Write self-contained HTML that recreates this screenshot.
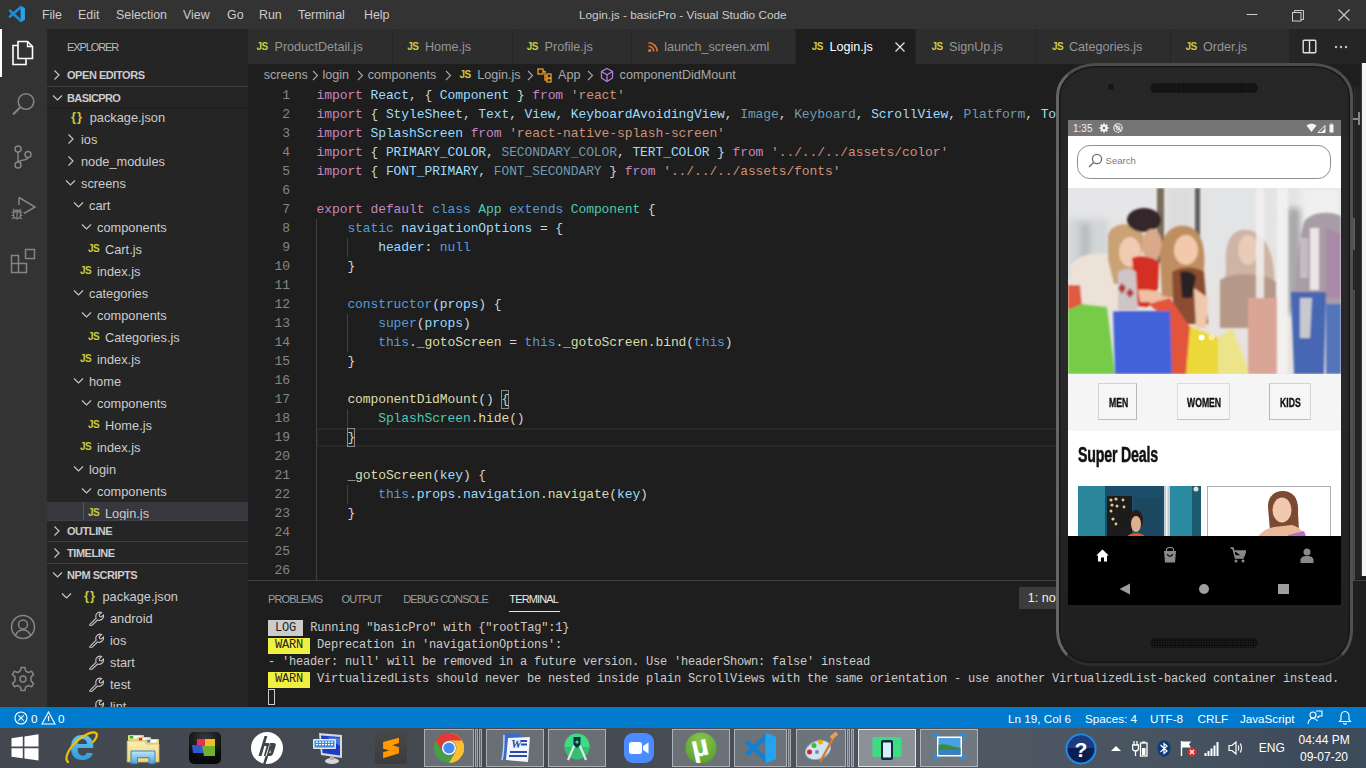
<!DOCTYPE html>
<html><head><meta charset="utf-8">
<style>
*{margin:0;padding:0;box-sizing:border-box}
html,body{width:1366px;height:768px;overflow:hidden;background:#1e1e1e;font-family:"Liberation Sans",sans-serif}
.a{position:absolute}
#title{left:0;top:0;width:1366px;height:29px;background:#333333}
#title .m{position:absolute;top:8px;font-size:12.4px;color:#cccccc;white-space:nowrap}
#act{left:0;top:29px;width:47px;height:678px;background:#333333}
#side{left:47px;top:29px;width:201px;height:678px;background:#252526;overflow:hidden}
#tabs{left:248px;top:29px;width:1118px;height:35px;background:#252526}
.tab{position:absolute;top:0;height:35px;background:#2d2d2d;border-right:1px solid #252526}
.tab .t{position:absolute;top:10px;font-size:12.6px;color:#969696;white-space:nowrap}
.js{position:absolute;font-family:"Liberation Sans",sans-serif;font-weight:bold;color:#cbcb41;font-size:10px;letter-spacing:-0.3px}
#crumb{left:248px;top:64px;width:1118px;height:21px;background:#1e1e1e}
#code{left:248px;top:85px;width:1118px;height:495px;background:#1e1e1e;overflow:hidden}
.ln{position:absolute;left:0;width:42px;text-align:right;font-family:"Liberation Mono",monospace;font-size:13px;letter-spacing:-0.1px;color:#858585;height:19px;line-height:19px}
.cl{position:absolute;left:68.6px;font-family:"Liberation Mono",monospace;font-size:13px;letter-spacing:-0.1px;color:#d4d4d4;height:19px;line-height:19px;white-space:pre}
.k{color:#c586c0}.v{color:#9cdcfe}.s{color:#ce9178}.b{color:#569cd6}.c{color:#4ec9b0}.f{color:#dcdcaa}.d{color:#6f9ab0}
#panel{left:248px;top:580px;width:1118px;height:127px;background:#1e1e1e;border-top:1px solid #414141}
.pt{position:absolute;top:12px;font-size:11px;color:#9d9d9d;white-space:nowrap;letter-spacing:-0.35px}
.term{position:absolute;left:20px;font-family:"Liberation Mono",monospace;font-size:13px;letter-spacing:-0.1px;color:#cccccc;white-space:pre;height:17px;line-height:17px}
.tag{background:#f0f040;color:#1e1e1e}
#status{left:0;top:707px;width:1366px;height:21px;background:#007acc;color:#fff}

#task{left:0;top:728px;width:1366px;height:40px;background:#3f434b}
.cat{font-size:12px;font-weight:bold;color:#111;-webkit-text-stroke:0.35px #111;height:14px;line-height:14px;transform:scaleX(0.72);transform-origin:0 0;white-space:nowrap}
.tb{top:729px;height:38px;background:rgba(255,255,255,0.2);border:1px solid rgba(255,255,255,0.45)}
.tbl{top:729px;height:38px;width:3px;background:rgba(255,255,255,0.18);border:1px solid rgba(255,255,255,0.4)}
.bm{display:inline-block;height:19px;vertical-align:top;box-shadow:inset 0 0 0 1px #8a8a8a;background:rgba(0,100,0,0.1)}
</style></head><body>
<div id="title" class="a">
 <svg class="a" style="left:4px;top:2px" width="26" height="24" viewBox="0 0 26 24"><path d="M16.6 4 L20.9 6 V18 L16.6 20 Z" fill="#24a6ef"/><path d="M6 8.6 L17 19 M6 14.6 L17 5" stroke="#1a8fd8" stroke-width="2.6" stroke-linecap="round"/></svg>
 <span class="m" style="left:42px">File</span>
 <span class="m" style="left:78px">Edit</span>
 <span class="m" style="left:116px">Selection</span>
 <span class="m" style="left:183px">View</span>
 <span class="m" style="left:227px">Go</span>
 <span class="m" style="left:259px">Run</span>
 <span class="m" style="left:298px">Terminal</span>
 <span class="m" style="left:364px">Help</span>
<svg class="a" style="left:1245px;top:8px" width="110" height="14" viewBox="0 0 110 14"><path d="M1.5 6.5 H12.5" stroke="#cccccc" stroke-width="1"/><rect x="47.5" y="4.5" width="8.5" height="8.5" fill="none" stroke="#cccccc" stroke-width="1"/><path d="M49.5 4.5 V2.5 H58.5 V11.5 H56" fill="none" stroke="#cccccc" stroke-width="1"/><path d="M93.5 1.5 L104.5 12.5 M104.5 1.5 L93.5 12.5" stroke="#cccccc" stroke-width="1.1"/></svg>
 <span class="m" style="left:579px;font-size:11.8px">Login.js - basicPro - Visual Studio Code</span>
</div>
<div id="act" class="a"></div>
<!-- activity bar icons -->
<div class="a" style="left:0;top:29px;width:2px;height:48px;background:#ffffff"></div>
<svg class="a" style="left:11px;top:40px" width="24" height="26" viewBox="0 0 24 26"><path d="M7 1.5 H16.5 L21.5 6.5 V18.5 H7 Z" fill="none" stroke="#ffffff" stroke-width="1.6"/><path d="M16.5 1.5 V6.5 H21.5" fill="none" stroke="#ffffff" stroke-width="1.3"/><path d="M7 5.5 H2 V24.5 H15 V18.5" fill="none" stroke="#ffffff" stroke-width="1.6"/></svg>
<svg class="a" style="left:11px;top:91px" width="26" height="26" viewBox="0 0 26 26"><circle cx="15" cy="10.5" r="7.8" fill="none" stroke="#858585" stroke-width="1.6"/><path d="M9.5 16 L2 23.5" stroke="#858585" stroke-width="1.9"/></svg>
<svg class="a" style="left:12px;top:143px" width="22" height="26" viewBox="0 0 22 26"><circle cx="6" cy="6" r="3" fill="none" stroke="#858585" stroke-width="1.5"/><circle cx="16" cy="11.5" r="3" fill="none" stroke="#858585" stroke-width="1.5"/><circle cx="6" cy="22" r="3" fill="none" stroke="#858585" stroke-width="1.5"/><path d="M6 9 V19 M16 14.5 C16 18 8 16 6.5 19" fill="none" stroke="#858585" stroke-width="1.5"/></svg>
<svg class="a" style="left:10px;top:195px" width="28" height="26" viewBox="0 0 28 26"><path d="M9 2.5 L25 12 L14 18.5" fill="none" stroke="#858585" stroke-width="1.5"/><path d="M9 2.5 V10" stroke="#858585" stroke-width="1.5"/><ellipse cx="7" cy="19.5" rx="3.6" ry="4.2" fill="none" stroke="#858585" stroke-width="1.4"/><path d="M1.5 17 H12.5 M1.5 20.5 H3.5 M10.5 20.5 H12.5 M2 24 L3.8 22.5 M12 24 L10.2 22.5 M3 14 L4.5 15.8 M11 14 L9.5 15.8 M7 16 V23" fill="none" stroke="#858585" stroke-width="1.2"/></svg>
<svg class="a" style="left:10px;top:248px" width="27" height="26" viewBox="0 0 27 26"><path d="M1.5 7.5 H8.5 V15.5 H16.5 V24.5 H1.5 Z M1.5 15.5 H8.5 V24.5 M8.5 15.5 V24.5" fill="none" stroke="#858585" stroke-width="1.5"/><rect x="15.5" y="1.5" width="9" height="9" fill="none" stroke="#858585" stroke-width="1.5"/></svg>
<svg class="a" style="left:10px;top:614px" width="26" height="26" viewBox="0 0 26 26"><circle cx="13" cy="13" r="11.5" fill="none" stroke="#858585" stroke-width="1.5"/><circle cx="13" cy="10.5" r="4.5" fill="none" stroke="#858585" stroke-width="1.5"/><path d="M5.5 21.5 C7 17.5 10 16 13 16 C16 16 19 17.5 20.5 21.5" fill="none" stroke="#858585" stroke-width="1.5"/></svg>
<svg class="a" style="left:10px;top:666px" width="26" height="26" viewBox="-13 -13 26 26"><path id="gear" d="M-1.9 -11.5 H1.9 L2.6 -8.1 L5.4 -6.5 L8.7 -7.7 L10.6 -4.4 L8 -2.1 V2.1 L10.6 4.4 L8.7 7.7 L5.4 6.5 L2.6 8.1 L1.9 11.5 H-1.9 L-2.6 8.1 L-5.4 6.5 L-8.7 7.7 L-10.6 4.4 L-8 2.1 V-2.1 L-10.6 -4.4 L-8.7 -7.7 L-5.4 -6.5 L-2.6 -8.1 Z" fill="none" stroke="#858585" stroke-width="1.5" stroke-linejoin="round"/><circle r="3" fill="none" stroke="#858585" stroke-width="1.5"/></svg>

<div id="side" class="a"></div>
<div class="a" style="left:67px;top:39px;height:16px;line-height:16px;font-size:11px;color:#bbbbbb;letter-spacing:-1.1px">EXPLORER</div>
<svg class="a" style="left:53px;top:69px" width="8" height="12"><polyline points="1.5,1.5 6,6 1.5,10.5" fill="none" stroke="#c5c5c5" stroke-width="1.2"/></svg>
<div class="a" style="left:67px;top:64px;height:22px;line-height:22px;font-size:11px;color:#cccccc;white-space:nowrap;font-weight:bold;letter-spacing:-0.45px">OPEN EDITORS</div>
<div class="a" style="left:47px;top:86px;width:201px;height:1px;background:#3f3f46"></div>
<svg class="a" style="left:52px;top:94px" width="12" height="8"><polyline points="1,1.5 5.5,6 10,1.5" fill="none" stroke="#c5c5c5" stroke-width="1.2"/></svg>
<div class="a" style="left:67px;top:87px;height:22px;line-height:22px;font-size:11px;color:#cccccc;white-space:nowrap;font-weight:bold;letter-spacing:-0.6px">BASICPRO</div>
<div class="a" style="left:47px;top:107px;width:201px;height:2px;background:linear-gradient(#1a1a1a,#252526)"></div>
<div class="a" style="left:47px;top:502px;width:201px;height:18px;background:#37373d"></div>
<div class="a" style="left:83px;top:502px;width:1px;height:18px;background:#585858"></div>
<div class="a" style="left:71px;top:109px;height:16px;line-height:16px;font-size:13px;font-weight:bold;color:#cbcb41;letter-spacing:1px">{}</div>
<div class="a" style="left:89.7px;top:106px;height:22px;line-height:24px;font-size:12.8px;color:#cccccc;white-space:nowrap;letter-spacing:0px">package.json</div>
<svg class="a" style="left:67px;top:133px" width="8" height="12"><polyline points="1.5,1.5 6,6 1.5,10.5" fill="none" stroke="#c5c5c5" stroke-width="1.2"/></svg>
<div class="a" style="left:81px;top:128px;height:22px;line-height:24px;font-size:12.8px;color:#cccccc;white-space:nowrap;letter-spacing:0px">ios</div>
<svg class="a" style="left:67px;top:155px" width="8" height="12"><polyline points="1.5,1.5 6,6 1.5,10.5" fill="none" stroke="#c5c5c5" stroke-width="1.2"/></svg>
<div class="a" style="left:81px;top:150px;height:22px;line-height:24px;font-size:12.8px;color:#cccccc;white-space:nowrap;letter-spacing:0px">node_modules</div>
<svg class="a" style="left:65px;top:179px" width="12" height="8"><polyline points="1,1.5 5.5,6 10,1.5" fill="none" stroke="#c5c5c5" stroke-width="1.2"/></svg>
<div class="a" style="left:81px;top:172px;height:22px;line-height:24px;font-size:12.8px;color:#cccccc;white-space:nowrap;letter-spacing:0px">screens</div>
<svg class="a" style="left:73px;top:201px" width="12" height="8"><polyline points="1,1.5 5.5,6 10,1.5" fill="none" stroke="#c5c5c5" stroke-width="1.2"/></svg>
<div class="a" style="left:89px;top:194px;height:22px;line-height:24px;font-size:12.8px;color:#cccccc;white-space:nowrap;letter-spacing:0px">cart</div>
<svg class="a" style="left:81px;top:223px" width="12" height="8"><polyline points="1,1.5 5.5,6 10,1.5" fill="none" stroke="#c5c5c5" stroke-width="1.2"/></svg>
<div class="a" style="left:97px;top:216px;height:22px;line-height:24px;font-size:12.8px;color:#cccccc;white-space:nowrap;letter-spacing:0px">components</div>
<div class="a" style="left:88px;top:243px;height:12px;line-height:12px;font-size:10px;font-weight:bold;color:#cbcb41;letter-spacing:-0.6px">JS</div>
<div class="a" style="left:105px;top:238px;height:22px;line-height:24px;font-size:12.8px;color:#cccccc;white-space:nowrap;letter-spacing:0px">Cart.js</div>
<div class="a" style="left:80px;top:265px;height:12px;line-height:12px;font-size:10px;font-weight:bold;color:#cbcb41;letter-spacing:-0.6px">JS</div>
<div class="a" style="left:97px;top:260px;height:22px;line-height:24px;font-size:12.8px;color:#cccccc;white-space:nowrap;letter-spacing:0px">index.js</div>
<svg class="a" style="left:73px;top:289px" width="12" height="8"><polyline points="1,1.5 5.5,6 10,1.5" fill="none" stroke="#c5c5c5" stroke-width="1.2"/></svg>
<div class="a" style="left:89px;top:282px;height:22px;line-height:24px;font-size:12.8px;color:#cccccc;white-space:nowrap;letter-spacing:0px">categories</div>
<svg class="a" style="left:81px;top:311px" width="12" height="8"><polyline points="1,1.5 5.5,6 10,1.5" fill="none" stroke="#c5c5c5" stroke-width="1.2"/></svg>
<div class="a" style="left:97px;top:304px;height:22px;line-height:24px;font-size:12.8px;color:#cccccc;white-space:nowrap;letter-spacing:0px">components</div>
<div class="a" style="left:88px;top:331px;height:12px;line-height:12px;font-size:10px;font-weight:bold;color:#cbcb41;letter-spacing:-0.6px">JS</div>
<div class="a" style="left:105px;top:326px;height:22px;line-height:24px;font-size:12.8px;color:#cccccc;white-space:nowrap;letter-spacing:0px">Categories.js</div>
<div class="a" style="left:80px;top:353px;height:12px;line-height:12px;font-size:10px;font-weight:bold;color:#cbcb41;letter-spacing:-0.6px">JS</div>
<div class="a" style="left:97px;top:348px;height:22px;line-height:24px;font-size:12.8px;color:#cccccc;white-space:nowrap;letter-spacing:0px">index.js</div>
<svg class="a" style="left:73px;top:377px" width="12" height="8"><polyline points="1,1.5 5.5,6 10,1.5" fill="none" stroke="#c5c5c5" stroke-width="1.2"/></svg>
<div class="a" style="left:89px;top:370px;height:22px;line-height:24px;font-size:12.8px;color:#cccccc;white-space:nowrap;letter-spacing:0px">home</div>
<svg class="a" style="left:81px;top:399px" width="12" height="8"><polyline points="1,1.5 5.5,6 10,1.5" fill="none" stroke="#c5c5c5" stroke-width="1.2"/></svg>
<div class="a" style="left:97px;top:392px;height:22px;line-height:24px;font-size:12.8px;color:#cccccc;white-space:nowrap;letter-spacing:0px">components</div>
<div class="a" style="left:88px;top:419px;height:12px;line-height:12px;font-size:10px;font-weight:bold;color:#cbcb41;letter-spacing:-0.6px">JS</div>
<div class="a" style="left:105px;top:414px;height:22px;line-height:24px;font-size:12.8px;color:#cccccc;white-space:nowrap;letter-spacing:0px">Home.js</div>
<div class="a" style="left:80px;top:441px;height:12px;line-height:12px;font-size:10px;font-weight:bold;color:#cbcb41;letter-spacing:-0.6px">JS</div>
<div class="a" style="left:97px;top:436px;height:22px;line-height:24px;font-size:12.8px;color:#cccccc;white-space:nowrap;letter-spacing:0px">index.js</div>
<svg class="a" style="left:73px;top:465px" width="12" height="8"><polyline points="1,1.5 5.5,6 10,1.5" fill="none" stroke="#c5c5c5" stroke-width="1.2"/></svg>
<div class="a" style="left:89px;top:458px;height:22px;line-height:24px;font-size:12.8px;color:#cccccc;white-space:nowrap;letter-spacing:0px">login</div>
<svg class="a" style="left:81px;top:487px" width="12" height="8"><polyline points="1,1.5 5.5,6 10,1.5" fill="none" stroke="#c5c5c5" stroke-width="1.2"/></svg>
<div class="a" style="left:97px;top:480px;height:22px;line-height:24px;font-size:12.8px;color:#cccccc;white-space:nowrap;letter-spacing:0px">components</div>
<div class="a" style="left:88px;top:507px;height:12px;line-height:12px;font-size:10px;font-weight:bold;color:#cbcb41;letter-spacing:-0.6px">JS</div>
<div class="a" style="left:105px;top:502px;height:22px;line-height:24px;font-size:12.8px;color:#cccccc;white-space:nowrap;letter-spacing:0px">Login.js</div>
<div class="a" style="left:47px;top:520px;width:201px;height:187px;background:#252526;overflow:hidden">
<div class="a" style="left:0;top:0;width:201px;height:1px;background:#3f3f46"></div>
<svg class="a" style="left:6px;top:5px" width="8" height="12"><polyline points="1.5,1.5 6,6 1.5,10.5" fill="none" stroke="#c5c5c5" stroke-width="1.2"/></svg>
<div class="a" style="left:20px;top:0px;height:22px;line-height:22px;font-size:11px;color:#cccccc;white-space:nowrap;font-weight:bold;letter-spacing:-0.45px">OUTLINE</div>
<div class="a" style="left:0;top:21px;width:201px;height:1px;background:#3f3f46"></div>
<svg class="a" style="left:6px;top:27px" width="8" height="12"><polyline points="1.5,1.5 6,6 1.5,10.5" fill="none" stroke="#c5c5c5" stroke-width="1.2"/></svg>
<div class="a" style="left:20px;top:22px;height:22px;line-height:22px;font-size:11px;color:#cccccc;white-space:nowrap;font-weight:bold;letter-spacing:-0.45px">TIMELINE</div>
<div class="a" style="left:0;top:43px;width:201px;height:1px;background:#3f3f46"></div>
<svg class="a" style="left:5px;top:51px" width="12" height="8"><polyline points="1,1.5 5.5,6 10,1.5" fill="none" stroke="#c5c5c5" stroke-width="1.2"/></svg>
<div class="a" style="left:20px;top:44px;height:22px;line-height:22px;font-size:11px;color:#cccccc;white-space:nowrap;font-weight:bold;letter-spacing:-0.45px">NPM SCRIPTS</div>
<svg class="a" style="left:14px;top:72px" width="12" height="8"><polyline points="1,1.5 5.5,6 10,1.5" fill="none" stroke="#c5c5c5" stroke-width="1.2"/></svg>
<div class="a" style="left:37px;top:68px;height:16px;line-height:16px;font-size:13px;font-weight:bold;color:#cbcb41;letter-spacing:1px">{}</div>
<div class="a" style="left:55.5px;top:65px;height:22px;line-height:24px;font-size:12.8px;color:#cccccc;white-space:nowrap;letter-spacing:0px">package.json</div>
<svg class="a" style="left:42px;top:91px" width="15" height="15" viewBox="0 0 15 15"><path d="M1.2 13.2 L7.2 7.2 C6.4 5.2 7 3 8.8 1.8 C10 1.1 11.4 1 12.6 1.4 L10.2 3.8 L10.6 5.6 L12.4 6 L14.4 4 C14.8 5.4 14.4 7 13.2 8 C12 9.2 10.2 9.6 8.6 9 L2.6 14.6 C2.2 15 1.4 15 1 14.6 C0.6 14.2 0.7 13.6 1.2 13.2 Z" fill="none" stroke="#c5c5c5" stroke-width="1.1"/></svg>
<div class="a" style="left:63px;top:87px;height:22px;line-height:24px;font-size:12.8px;color:#cccccc;white-space:nowrap;letter-spacing:0px">android</div>
<svg class="a" style="left:42px;top:113px" width="15" height="15" viewBox="0 0 15 15"><path d="M1.2 13.2 L7.2 7.2 C6.4 5.2 7 3 8.8 1.8 C10 1.1 11.4 1 12.6 1.4 L10.2 3.8 L10.6 5.6 L12.4 6 L14.4 4 C14.8 5.4 14.4 7 13.2 8 C12 9.2 10.2 9.6 8.6 9 L2.6 14.6 C2.2 15 1.4 15 1 14.6 C0.6 14.2 0.7 13.6 1.2 13.2 Z" fill="none" stroke="#c5c5c5" stroke-width="1.1"/></svg>
<div class="a" style="left:63px;top:109px;height:22px;line-height:24px;font-size:12.8px;color:#cccccc;white-space:nowrap;letter-spacing:0px">ios</div>
<svg class="a" style="left:42px;top:135px" width="15" height="15" viewBox="0 0 15 15"><path d="M1.2 13.2 L7.2 7.2 C6.4 5.2 7 3 8.8 1.8 C10 1.1 11.4 1 12.6 1.4 L10.2 3.8 L10.6 5.6 L12.4 6 L14.4 4 C14.8 5.4 14.4 7 13.2 8 C12 9.2 10.2 9.6 8.6 9 L2.6 14.6 C2.2 15 1.4 15 1 14.6 C0.6 14.2 0.7 13.6 1.2 13.2 Z" fill="none" stroke="#c5c5c5" stroke-width="1.1"/></svg>
<div class="a" style="left:63px;top:131px;height:22px;line-height:24px;font-size:12.8px;color:#cccccc;white-space:nowrap;letter-spacing:0px">start</div>
<svg class="a" style="left:42px;top:157px" width="15" height="15" viewBox="0 0 15 15"><path d="M1.2 13.2 L7.2 7.2 C6.4 5.2 7 3 8.8 1.8 C10 1.1 11.4 1 12.6 1.4 L10.2 3.8 L10.6 5.6 L12.4 6 L14.4 4 C14.8 5.4 14.4 7 13.2 8 C12 9.2 10.2 9.6 8.6 9 L2.6 14.6 C2.2 15 1.4 15 1 14.6 C0.6 14.2 0.7 13.6 1.2 13.2 Z" fill="none" stroke="#c5c5c5" stroke-width="1.1"/></svg>
<div class="a" style="left:63px;top:153px;height:22px;line-height:24px;font-size:12.8px;color:#cccccc;white-space:nowrap;letter-spacing:0px">test</div>
<svg class="a" style="left:42px;top:179px" width="15" height="15" viewBox="0 0 15 15"><path d="M1.2 13.2 L7.2 7.2 C6.4 5.2 7 3 8.8 1.8 C10 1.1 11.4 1 12.6 1.4 L10.2 3.8 L10.6 5.6 L12.4 6 L14.4 4 C14.8 5.4 14.4 7 13.2 8 C12 9.2 10.2 9.6 8.6 9 L2.6 14.6 C2.2 15 1.4 15 1 14.6 C0.6 14.2 0.7 13.6 1.2 13.2 Z" fill="none" stroke="#c5c5c5" stroke-width="1.1"/></svg>
<div class="a" style="left:63px;top:175px;height:22px;line-height:24px;font-size:12.8px;color:#cccccc;white-space:nowrap;letter-spacing:0px">lint</div>
</div>

<div id="tabs" class="a"></div>
<div id="crumb" class="a"></div>
<div class="a" style="left:248px;top:29px;width:144px;height:35px;background:#2d2d2d"></div>
<div class="a" style="left:256.5px;top:41px;height:12px;line-height:12px;font-size:10px;font-weight:bold;color:#cbcb41;letter-spacing:-0.6px">JS</div>
<div class="a" style="left:274.5px;top:29px;height:36px;line-height:37.5px;font-size:12.6px;color:#969696;white-space:nowrap">ProductDetail.js</div>
<div class="a" style="left:393px;top:29px;width:118.5px;height:35px;background:#2d2d2d"></div>
<div class="a" style="left:407.3px;top:41px;height:12px;line-height:12px;font-size:10px;font-weight:bold;color:#cbcb41;letter-spacing:-0.6px">JS</div>
<div class="a" style="left:424.9px;top:29px;height:36px;line-height:37.5px;font-size:12.6px;color:#969696;white-space:nowrap">Home.js</div>
<div class="a" style="left:512.5px;top:29px;width:118.89999999999998px;height:35px;background:#2d2d2d"></div>
<div class="a" style="left:526.8px;top:41px;height:12px;line-height:12px;font-size:10px;font-weight:bold;color:#cbcb41;letter-spacing:-0.6px">JS</div>
<div class="a" style="left:544.6px;top:29px;height:36px;line-height:37.5px;font-size:12.6px;color:#969696;white-space:nowrap">Profile.js</div>
<div class="a" style="left:632.4px;top:29px;width:162.60000000000002px;height:35px;background:#2d2d2d"></div>
<svg class="a" style="left:648.3px;top:42px" width="10" height="10" viewBox="0 0 10 10"><circle cx="1.6" cy="8.4" r="1.5" fill="#e37933"/><path d="M0.5 4.2 A5.3 5.3 0 0 1 5.8 9.5" fill="none" stroke="#e37933" stroke-width="1.6"/><path d="M0.5 0.8 A8.7 8.7 0 0 1 9.2 9.5" fill="none" stroke="#e37933" stroke-width="1.6"/></svg>
<div class="a" style="left:664.3px;top:29px;height:36px;line-height:37.5px;font-size:12.6px;color:#969696;white-space:nowrap">launch_screen.xml</div>
<div class="a" style="left:796px;top:29px;width:119px;height:35px;background:#1e1e1e"></div>
<div class="a" style="left:811.8px;top:41px;height:12px;line-height:12px;font-size:10px;font-weight:bold;color:#cbcb41;letter-spacing:-0.6px">JS</div>
<div class="a" style="left:829.4px;top:29px;height:36px;line-height:37.5px;font-size:12.6px;color:#ffffff;white-space:nowrap">Login.js</div>
<div class="a" style="left:916px;top:29px;width:119.5px;height:35px;background:#2d2d2d"></div>
<div class="a" style="left:931.5px;top:41px;height:12px;line-height:12px;font-size:10px;font-weight:bold;color:#cbcb41;letter-spacing:-0.6px">JS</div>
<div class="a" style="left:949px;top:29px;height:36px;line-height:37.5px;font-size:12.6px;color:#969696;white-space:nowrap">SignUp.js</div>
<div class="a" style="left:1036.5px;top:29px;width:133.5px;height:35px;background:#2d2d2d"></div>
<div class="a" style="left:1052px;top:41px;height:12px;line-height:12px;font-size:10px;font-weight:bold;color:#cbcb41;letter-spacing:-0.6px">JS</div>
<div class="a" style="left:1068.9px;top:29px;height:36px;line-height:37.5px;font-size:12.6px;color:#969696;white-space:nowrap">Categories.js</div>
<div class="a" style="left:1171px;top:29px;width:118px;height:35px;background:#2d2d2d"></div>
<div class="a" style="left:1185.5px;top:41px;height:12px;line-height:12px;font-size:10px;font-weight:bold;color:#cbcb41;letter-spacing:-0.6px">JS</div>
<div class="a" style="left:1203px;top:29px;height:36px;line-height:37.5px;font-size:12.6px;color:#969696;white-space:nowrap">Order.js</div>
<svg class="a" style="left:894px;top:41px" width="12" height="12"><path d="M1.5 1.5 L10.5 10.5 M10.5 1.5 L1.5 10.5" stroke="#e0e0e0" stroke-width="1.3"/></svg>
<svg class="a" style="left:1302px;top:39px" width="15" height="15"><rect x="1.2" y="1.2" width="12.6" height="12.6" rx="1" fill="none" stroke="#e0e0e0" stroke-width="1.4"/><line x1="7.5" y1="1" x2="7.5" y2="14" stroke="#e0e0e0" stroke-width="1.4"/></svg>
<svg class="a" style="left:1334px;top:45px" width="15" height="4"><circle cx="2" cy="2" r="1.2" fill="#c5c5c5"/><circle cx="7" cy="2" r="1.2" fill="#c5c5c5"/><circle cx="12" cy="2" r="1.2" fill="#c5c5c5"/></svg>
<div class="a" style="left:263.7px;top:64px;height:22px;line-height:22px;font-size:12.6px;color:#a9a9a9;white-space:nowrap">screens</div>
<svg class="a" style="left:312px;top:70px" width="7" height="11"><polyline points="1,1 5.5,5.5 1,10" fill="none" stroke="#a9a9a9" stroke-width="1.1"/></svg>
<div class="a" style="left:322.4px;top:64px;height:22px;line-height:22px;font-size:12.6px;color:#a9a9a9;white-space:nowrap">login</div>
<svg class="a" style="left:357px;top:70px" width="7" height="11"><polyline points="1,1 5.5,5.5 1,10" fill="none" stroke="#a9a9a9" stroke-width="1.1"/></svg>
<div class="a" style="left:367.8px;top:64px;height:22px;line-height:22px;font-size:12.6px;color:#a9a9a9;white-space:nowrap">components</div>
<svg class="a" style="left:445px;top:70px" width="7" height="11"><polyline points="1,1 5.5,5.5 1,10" fill="none" stroke="#a9a9a9" stroke-width="1.1"/></svg>
<div class="a" style="left:459.6px;top:69px;height:12px;line-height:12px;font-size:10px;font-weight:bold;color:#cbcb41;letter-spacing:-0.6px">JS</div>
<div class="a" style="left:477.2px;top:64px;height:22px;line-height:22px;font-size:12.6px;color:#a9a9a9;white-space:nowrap">Login.js</div>
<svg class="a" style="left:527px;top:70px" width="7" height="11"><polyline points="1,1 5.5,5.5 1,10" fill="none" stroke="#a9a9a9" stroke-width="1.1"/></svg>
<svg class="a" style="left:537px;top:67px" width="16" height="16" viewBox="0 0 16 16"><g fill="none" stroke="#ee9d28" stroke-width="1.3"><rect x="1" y="2" width="5" height="5" transform="rotate(0)"/><rect x="10" y="7" width="4" height="4"/><rect x="10" y="11.5" width="4" height="3.5"/><path d="M6 4.5 H8 V13 H10 M8 9 H10"/></g></svg>
<div class="a" style="left:558px;top:64px;height:22px;line-height:22px;font-size:12.6px;color:#a9a9a9;white-space:nowrap">App</div>
<svg class="a" style="left:587px;top:70px" width="7" height="11"><polyline points="1,1 5.5,5.5 1,10" fill="none" stroke="#a9a9a9" stroke-width="1.1"/></svg>
<svg class="a" style="left:600px;top:67px" width="14" height="16" viewBox="0 0 14 16"><g fill="none" stroke="#b180d7" stroke-width="1.3"><path d="M7 1.5 L12.5 4.5 V11 L7 14.5 L1.5 11 V4.5 Z"/><path d="M1.5 4.5 L7 7.8 L12.5 4.5 M7 7.8 V14.5"/></g></svg>
<div class="a" style="left:619.6px;top:64px;height:22px;line-height:22px;font-size:12.6px;color:#a9a9a9;white-space:nowrap">componentDidMount</div>

<div id="code" class="a">
<div class="a" style="left:68px;top:343px;width:1050px;height:19px;border:2px solid #282828"></div>
<div class="a" style="left:68px;top:134px;width:1px;height:361px;background:#404040"></div>
<div class="a" style="left:99px;top:153px;width:1px;height:19px;background:#404040"></div>
<div class="a" style="left:99px;top:229px;width:1px;height:38px;background:#404040"></div>
<div class="a" style="left:99px;top:324px;width:1px;height:19px;background:#404040"></div>
<div class="a" style="left:99px;top:400px;width:1px;height:19px;background:#404040"></div>
<div class="ln" style="top:1px">1</div>
<div class="cl" style="top:1px"><span class="k">import</span> <span class="v">React</span>, { <span class="v">Component</span> } <span class="k">from</span> <span class="s">'react'</span></div>
<div class="ln" style="top:20px">2</div>
<div class="cl" style="top:20px"><span class="k">import</span> { <span class="v">StyleSheet</span>, <span class="v">Text</span>, <span class="v">View</span>, <span class="v">KeyboardAvoidingView</span>, <span class="d">Image</span>, <span class="d">Keyboard</span>, <span class="v">ScrollView</span>, <span class="d">Platform</span>, <span class="v">TouchableOpacity</span> } <span class="k">from</span> <span class="s">'react-native'</span></div>
<div class="ln" style="top:39px">3</div>
<div class="cl" style="top:39px"><span class="k">import</span> <span class="v">SplashScreen</span> <span class="k">from</span> <span class="s">'react-native-splash-screen'</span></div>
<div class="ln" style="top:58px">4</div>
<div class="cl" style="top:58px"><span class="k">import</span> { <span class="v">PRIMARY_COLOR</span>, <span class="d">SECONDARY_COLOR</span>, <span class="v">TERT_COLOR</span> } <span class="k">from</span> <span class="s">'../../../assets/color'</span></div>
<div class="ln" style="top:77px">5</div>
<div class="cl" style="top:77px"><span class="k">import</span> { <span class="v">FONT_PRIMARY</span>, <span class="d">FONT_SECONDARY</span> } <span class="k">from</span> <span class="s">'../../../assets/fonts'</span></div>
<div class="ln" style="top:96px">6</div>
<div class="ln" style="top:115px">7</div>
<div class="cl" style="top:115px"><span class="k">export</span> <span class="k">default</span> <span class="b">class</span> <span class="c">App</span> <span class="b">extends</span> <span class="c">Component</span> {</div>
<div class="ln" style="top:134px">8</div>
<div class="cl" style="top:134px">    <span class="b">static</span> <span class="v">navigationOptions</span> = {</div>
<div class="ln" style="top:153px">9</div>
<div class="cl" style="top:153px">        <span class="v">header</span>: <span class="b">null</span></div>
<div class="ln" style="top:172px">10</div>
<div class="cl" style="top:172px">    }</div>
<div class="ln" style="top:191px">11</div>
<div class="ln" style="top:210px">12</div>
<div class="cl" style="top:210px">    <span class="b">constructor</span>(<span class="v">props</span>) {</div>
<div class="ln" style="top:229px">13</div>
<div class="cl" style="top:229px">        <span class="b">super</span>(<span class="v">props</span>)</div>
<div class="ln" style="top:248px">14</div>
<div class="cl" style="top:248px">        <span class="b">this</span>.<span class="f">_gotoScreen</span> = <span class="b">this</span>.<span class="f">_gotoScreen</span>.<span class="f">bind</span>(<span class="b">this</span>)</div>
<div class="ln" style="top:267px">15</div>
<div class="cl" style="top:267px">    }</div>
<div class="ln" style="top:286px">16</div>
<div class="ln" style="top:305px">17</div>
<div class="cl" style="top:305px">    <span class="f">componentDidMount</span>() <span class="bm">{</span></div>
<div class="ln" style="top:324px">18</div>
<div class="cl" style="top:324px">        <span class="c">SplashScreen</span>.<span class="f">hide</span>()</div>
<div class="ln" style="top:343px">19</div>
<div class="cl" style="top:343px">    <span class="bm">}</span></div>
<div class="ln" style="top:362px">20</div>
<div class="ln" style="top:381px">21</div>
<div class="cl" style="top:381px">    <span class="f">_gotoScreen</span>(<span class="v">key</span>) {</div>
<div class="ln" style="top:400px">22</div>
<div class="cl" style="top:400px">        <span class="b">this</span>.<span class="v">props</span>.<span class="v">navigation</span>.<span class="f">navigate</span>(<span class="v">key</span>)</div>
<div class="ln" style="top:419px">23</div>
<div class="cl" style="top:419px">    }</div>
<div class="ln" style="top:438px">24</div>
<div class="ln" style="top:457px">25</div>
<div class="ln" style="top:476px">26</div>
</div>
<div id="panel" class="a"></div>
<div id="status" class="a"></div>
<div class="a" style="left:268px;top:588px;height:22px;line-height:22px;font-size:11px;color:#9d9d9d;white-space:nowrap;letter-spacing:-0.85px">PROBLEMS</div>
<div class="a" style="left:341.6px;top:588px;height:22px;line-height:22px;font-size:11px;color:#9d9d9d;white-space:nowrap;letter-spacing:-0.85px">OUTPUT</div>
<div class="a" style="left:403.2px;top:588px;height:22px;line-height:22px;font-size:11px;color:#9d9d9d;white-space:nowrap;letter-spacing:-0.85px">DEBUG CONSOLE</div>
<div class="a" style="left:509.3px;top:588px;height:22px;line-height:22px;font-size:11px;color:#e7e7e7;white-space:nowrap;letter-spacing:-0.85px">TERMINAL</div>
<div class="a" style="left:509px;top:611px;width:51px;height:1px;background:#e7e7e7"></div>
<div class="a" style="left:1019px;top:587px;width:60px;height:22px;background:#3c3c3c"></div>
<div class="a" style="left:1027.8px;top:587px;height:22px;line-height:22px;font-size:12.5px;color:#f0f0f0;white-space:nowrap">1: node</div>
<div class="a" style="left:268px;top:620px;width:35px;height:16px;background:#cccccc"></div>
<div class="a" style="left:275px;top:620px;height:17px;line-height:17px;font-family:'Liberation Mono',monospace;font-size:12px;letter-spacing:-0.2px;color:#cccccc;white-space:pre"><span style="color:#1e1e1e">LOG</span></div>
<div class="a" style="left:310.3px;top:620px;height:17px;line-height:17px;font-family:'Liberation Mono',monospace;font-size:12px;letter-spacing:-0.2px;color:#cccccc;white-space:pre">Running "basicPro" with {"rootTag":1}</div>
<div class="a" style="left:268px;top:637.5px;width:42px;height:16px;background:#f0f040"></div>
<div class="a" style="left:275px;top:637px;height:17px;line-height:17px;font-family:'Liberation Mono',monospace;font-size:12px;letter-spacing:-0.2px;color:#cccccc;white-space:pre"><span style="color:#1e1e1e">WARN</span></div>
<div class="a" style="left:316.9px;top:637px;height:17px;line-height:17px;font-family:'Liberation Mono',monospace;font-size:12px;letter-spacing:-0.2px;color:#cccccc;white-space:pre">Deprecation in 'navigationOptions':</div>
<div class="a" style="left:268px;top:654px;height:17px;line-height:17px;font-family:'Liberation Mono',monospace;font-size:12px;letter-spacing:-0.2px;color:#cccccc;white-space:pre">- 'header: null' will be removed in a future version. Use 'headerShown: false' instead</div>
<div class="a" style="left:268px;top:671.5px;width:42px;height:16px;background:#f0f040"></div>
<div class="a" style="left:275px;top:671px;height:17px;line-height:17px;font-family:'Liberation Mono',monospace;font-size:12px;letter-spacing:-0.2px;color:#cccccc;white-space:pre"><span style="color:#1e1e1e">WARN</span></div>
<div class="a" style="left:316.9px;top:671px;height:17px;line-height:17px;font-family:'Liberation Mono',monospace;font-size:12px;letter-spacing:-0.2px;color:#cccccc;white-space:pre">VirtualizedLists should never be nested inside plain ScrollViews with the same orientation - use another VirtualizedList-backed container instead.</div>
<div class="a" style="left:268px;top:689px;width:7px;height:16px;border:1px solid #cccccc"></div>
<svg class="a" style="left:14px;top:711px" width="14" height="14" viewBox="0 0 14 14"><circle cx="7" cy="7" r="6" fill="none" stroke="#fff" stroke-width="1.1"/><path d="M4.3 4.3 L9.7 9.7 M9.7 4.3 L4.3 9.7" stroke="#fff" stroke-width="1.1"/></svg>
<div class="a" style="left:31px;top:708px;height:21px;line-height:22px;font-size:11.7px;color:#ffffff;white-space:nowrap">0</div>
<svg class="a" style="left:41px;top:711px" width="15" height="14" viewBox="0 0 15 14"><path d="M7.5 1 L14 13 H1 Z" fill="none" stroke="#fff" stroke-width="1.1"/><path d="M7.5 5 V10" stroke="#fff" stroke-width="1.2"/></svg>
<div class="a" style="left:58px;top:708px;height:21px;line-height:22px;font-size:11.7px;color:#ffffff;white-space:nowrap">0</div>
<div class="a" style="left:1008px;top:708px;height:21px;line-height:22px;font-size:11.7px;color:#ffffff;white-space:nowrap">Ln 19, Col 6</div>
<div class="a" style="left:1085px;top:708px;height:21px;line-height:22px;font-size:11.7px;color:#ffffff;white-space:nowrap">Spaces: 4</div>
<div class="a" style="left:1150px;top:708px;height:21px;line-height:22px;font-size:11.7px;color:#ffffff;white-space:nowrap">UTF-8</div>
<div class="a" style="left:1197.6px;top:708px;height:21px;line-height:22px;font-size:11.7px;color:#ffffff;white-space:nowrap">CRLF</div>
<div class="a" style="left:1239.9px;top:708px;height:21px;line-height:22px;font-size:11.7px;color:#ffffff;white-space:nowrap">JavaScript</div>
<svg class="a" style="left:1307px;top:710px" width="16" height="15" viewBox="0 0 16 15"><circle cx="6" cy="5" r="3" fill="none" stroke="#fff" stroke-width="1.1"/><path d="M1 14 C1.5 10 3.5 8.5 6 8.5 C8 8.5 9.5 9.5 10.5 11 M9 1 H15 V6 H12.5 L11 7.5 V6" fill="none" stroke="#fff" stroke-width="1.1"/></svg>
<svg class="a" style="left:1338px;top:710px" width="14" height="15" viewBox="0 0 14 15"><path d="M7 1.5 C4.5 1.5 3 3.5 3 6 V9.5 L1.5 11.5 H12.5 L11 9.5 V6 C11 3.5 9.5 1.5 7 1.5 Z M5.5 13 C5.8 14 6.3 14.3 7 14.3 C7.7 14.3 8.2 14 8.5 13" fill="none" stroke="#fff" stroke-width="1.1"/></svg>

<!-- phone -->
<div class="a" style="left:1354px;top:86px;width:7px;height:492px;background:#232323;border-left:1px solid #2e2e2e"></div>
<div class="a" style="left:1353px;top:218px;width:2px;height:32px;background:#5a5a5a"></div>
<div class="a" style="left:1353px;top:290px;width:2px;height:290px;background:#4a4a4a"></div>
<div class="a" style="left:1353px;top:118px;width:6px;height:1.5px;background:#888"></div>
<div class="a" style="left:1358px;top:112px;width:1.5px;height:13px;background:#888"></div>

<div class="a" style="left:1361px;top:63px;width:5px;height:513px;background:#f4f4f4;border-left:1px solid #3a3a3a"></div>
<div class="a" style="left:1055.5px;top:62.5px;width:297.5px;height:603px;border-radius:40px 40px 34px 34px / 33px 33px 35px 35px;background:linear-gradient(180deg,#262627 0%,#29292a 50%,#1f1f20 100%);border:3px solid;border-color:#4c4c4c #505050 #2c2c2c #656565;box-shadow:inset 0 0 0 1.3px #141414"></div>
<div class="a" style="left:1150px;top:82.5px;width:108px;height:10px;border-radius:5px;background:radial-gradient(circle,#080808 0.7px,#1b1b1b 1.1px) 0 0/2.6px 2.6px;border:1px solid #161616"></div>
<div class="a" style="left:1107px;top:83px;width:8px;height:8px;border-radius:50%;background:#151515;border:1px solid #2a2a2a"></div>
<div class="a" style="left:1150px;top:638px;width:108px;height:10px;border-radius:5px;background:radial-gradient(circle,#080808 0.7px,#1b1b1b 1.1px) 0 0/2.6px 2.6px;border:1px solid #141414"></div>
<!-- screen -->
<div class="a" style="left:1068px;top:120px;width:273px;height:485px;background:#ffffff;overflow:hidden">
 <div class="a" style="left:0;top:0;width:273px;height:16px;background:#757575"></div>
 <div class="a" style="left:5px;top:1px;height:15px;line-height:15px;font-size:10px;color:#f0f0f0">1:35</div>
 <svg class="a" style="left:31px;top:3px" width="10" height="10" viewBox="0 0 10 10"><circle cx="5" cy="5" r="3.2" fill="#f0f0f0"/><g stroke="#f0f0f0" stroke-width="2"><line x1="5" y1="0.5" x2="5" y2="9.5"/><line x1="0.5" y1="5" x2="9.5" y2="5"/><line x1="1.8" y1="1.8" x2="8.2" y2="8.2"/><line x1="8.2" y1="1.8" x2="1.8" y2="8.2"/></g><circle cx="5" cy="5" r="1.2" fill="#757575"/></svg>
 <svg class="a" style="left:45px;top:3px" width="10" height="10" viewBox="0 0 10 10"><circle cx="5" cy="5" r="4.2" fill="none" stroke="#f0f0f0" stroke-width="1.1"/><circle cx="5" cy="5" r="2" fill="none" stroke="#f0f0f0" stroke-width="1"/><line x1="2" y1="2" x2="8" y2="8" stroke="#f0f0f0" stroke-width="1.1"/></svg>
 <svg class="a" style="left:238px;top:3px" width="30" height="10" viewBox="0 0 30 10"><path d="M0.5 2.5 C3.5 0 7.5 0 10.5 2.5 L5.5 9 Z" fill="#f4f4f4"/><path d="M12 9.5 L19 2.5 V9.5 Z" fill="none" stroke="#f4f4f4" stroke-width="1"/><path d="M15 9.5 L19 5.5 V9.5 Z" fill="#f4f4f4"/><rect x="23.5" y="1.5" width="4" height="8" fill="#f4f4f4"/><rect x="24.5" y="0.5" width="2" height="1" fill="#f4f4f4"/></svg>
 <!-- search -->
 <div class="a" style="left:9px;top:25px;width:254px;height:34px;border-radius:13px;border:1px solid #8f8f8f;background:#fff"></div>
 <svg class="a" style="left:20px;top:33px" width="15" height="15" viewBox="0 0 15 15"><circle cx="9" cy="6" r="4.6" fill="none" stroke="#6e6e6e" stroke-width="1.3"/><line x1="5.6" y1="9.4" x2="1" y2="14" stroke="#6e6e6e" stroke-width="1.4"/></svg>
 <div class="a" style="left:37.5px;top:33px;height:16px;line-height:16px;font-size:9.6px;color:#7a7a7a">Search</div>
 <!-- banner -->
 <div class="a" style="left:0;top:68px;width:273px;height:186px;overflow:hidden;background:#e9e9ec"><svg class="a" style="left:0;top:0" width="273" height="186" viewBox="0 0 273 186">
<defs>
<filter id="bl" x="-20%" y="-20%" width="140%" height="140%"><feGaussianBlur stdDeviation="1.2"/></filter>
<filter id="bl2" x="-20%" y="-20%" width="140%" height="140%"><feGaussianBlur stdDeviation="3"/></filter>
<linearGradient id="bgg" x1="0" y1="0" x2="0" y2="1"><stop offset="0" stop-color="#e4e4e6"/><stop offset="0.5" stop-color="#e6e4e2"/><stop offset="1" stop-color="#e8e2de"/></linearGradient>
</defs>
<rect width="273" height="186" fill="url(#bgg)"/>
<g filter="url(#bl2)">
 <rect x="0" y="0" width="90" height="30" fill="#e6e6e8"/>
 <rect x="0" y="30" width="40" height="60" fill="#d2d6d8"/>
 <rect x="12" y="35" width="10" height="40" fill="#b8bcbc"/>
 <rect x="100" y="0" width="26" height="70" fill="#dcdcdc"/>
 <rect x="140" y="0" width="45" height="80" fill="#e2e4e6"/>
 <rect x="219" y="20" width="14" height="106" fill="#a8a8aa"/>
 <rect x="233" y="0" width="40" height="40" fill="#f0f0f0"/>
</g>
<g filter="url(#bl)">
 <rect x="89" y="0" width="7" height="75" fill="#7a6c58"/>
 <rect x="127" y="0" width="5" height="60" fill="#5e5e5e"/>
 <!-- left coat -->
 <path d="M2 78 C10 66 30 62 48 68 L52 122 L20 130 L4 120 Z" fill="#ece2d8"/>
 <!-- left girl hair/face -->
 <path d="M40 48 C42 36 58 33 72 40 C78 48 76 62 70 76 L62 96 L46 96 L40 72 Z" fill="#c9a274"/>
 <ellipse cx="62" cy="64" rx="11" ry="15" fill="#f0cab2"/>
 <!-- middle girl -->
 <ellipse cx="76" cy="32" rx="17" ry="12" fill="#35282a"/>
 <ellipse cx="84" cy="57" rx="10" ry="16" fill="#d9a98a"/>
 <path d="M64 70 C72 66 86 70 91 74 L90 100 L80 119 L66 118 L66 90 Z" fill="#d52f22"/>
 <path d="M50 84 C56 80 64 80 68 84 L70 122 L50 122 Z" fill="#cfc4c6"/>
 <path d="M54 95 L58 100 L54 106 L50 100 Z M62 100 L66 105 L62 110 L58 105 Z" fill="#b33a3a"/>
 <path d="M70 102 C80 101 96 103 102 110 L98 114 L72 114 Z" fill="#efc0a2"/>
 <!-- right girl -->
 <path d="M92 72 C92 45 104 36 118 38 C132 40 138 56 136 80 L136 110 L118 112 L94 108 Z" fill="#bf8e60"/>
 <ellipse cx="118" cy="62" rx="12" ry="15" fill="#f2c9aa"/>
 <path d="M104 84 C112 78 128 78 136 84 L140 136 L106 136 Z" fill="#8b4e32"/>
 <path d="M112 84 C118 82 124 84 128 88 L124 110 L114 110 Z" fill="#2c2422"/>
 <path d="M126 100 L140 110 L138 140 L128 140 Z" fill="#f0c8ac"/>
 <!-- reflection girl -->
 <path d="M158 80 C156 50 166 40 180 42 C194 44 204 58 206 84 L208 136 L154 136 Z" fill="#cdb4a4"/>
 <ellipse cx="180" cy="62" rx="10" ry="15" fill="#e9cbb8"/>
 <path d="M152 92 C162 84 198 84 208 94 L208 140 L152 140 Z" fill="#b69888"/>
 <!-- mannequin -->
 <path d="M236 34 C242 24 262 22 273 28 L273 116 L226 118 L230 60 Z" fill="#a89ca6"/>
 <rect x="242" y="40" width="9" height="62" fill="#e8e4e8"/><rect x="232" y="50" width="8" height="40" fill="#c4bcc4"/>
 <path d="M258 40 L273 46 L273 110 L258 110 Z" fill="#a88aa8"/>
 <path d="M223 104 L258 104 L256 186 L226 186 Z" fill="#4766b4"/>
 <path d="M232 110 L244 110 L242 150 L232 150 Z" fill="#c8c8d0"/>
 <path d="M258 116 L273 116 L273 186 L258 186 Z" fill="#5474bb"/>
 <!-- white vertical bars -->
 <rect x="188" y="0" width="8" height="186" fill="#f2f0f0" opacity="0.85"/>
 <rect x="209" y="0" width="11" height="186" fill="#f4f2f2" opacity="0.85"/>
 <!-- bags -->
 <path d="M0 97 L12 97 L14 118 L0 124 Z" fill="#e05a40"/>
 <path d="M80 116 L102 110 L126 145 L122 186 L102 186 L98 130 Z" fill="#e2553b"/>
 <path d="M0 122 L14 116 L39 119 L47 186 L0 186 Z" fill="#76cc46"/>
 <path d="M45 123 L102 123 L104 186 L47 186 Z" fill="#4262da"/>
 <path d="M136 160 L150 150 L164 140 L182 186 L136 186 Z" fill="#ece48a"/>
 <path d="M122 138 L150 150 L150 186 L118 186 Z" fill="#ecd838"/>
 <path d="M180 110 L209 110 L209 186 L180 186 Z" fill="#dba595"/>
</g>
<circle cx="133.6" cy="149.4" r="3" fill="#ffffff"/>
<circle cx="143.5" cy="149.4" r="3" fill="#ffffff" opacity="0.5"/>
</svg>
</div>
 <!-- categories -->
 <div class="a" style="left:0;top:254px;width:273px;height:57px;background:#f5f5f5"></div>
 <div class="a" style="left:30px;top:263px;width:39px;height:37px;border:1px solid #d4d4d4;border-right-color:#b8b8b8;border-bottom-color:#bdbdbd;background:#f6f6f6"></div>
 <div class="a" style="left:108.7px;top:263px;width:53px;height:37px;border:1px solid #dcdcdc;border-bottom-color:#c4c4c4;background:#f6f6f6"></div>
 <div class="a" style="left:201px;top:263px;width:42px;height:37px;border:1px solid #d4d4d4;border-left-color:#b8b8b8;border-bottom-color:#bdbdbd;background:#f6f6f6"></div>
 <div class="a cat" style="left:40.5px;top:276px">MEN</div>
 <div class="a cat" style="left:118.5px;top:276px">WOMEN</div>
 <div class="a cat" style="left:211.5px;top:276px">KIDS</div>
 <div class="a" style="left:9.5px;top:322px;height:26px;line-height:26px;font-size:21.5px;font-weight:bold;color:#111;-webkit-text-stroke:0.5px #111;transform:scaleX(0.66);transform-origin:0 0;white-space:nowrap;letter-spacing:-0.3px">Super Deals</div>
 <!-- cards -->
 <div class="a" style="left:9.5px;top:366px;width:123px;height:60px;overflow:hidden;background:#2a7f92"><svg class="a" style="left:0;top:0" width="123" height="60" viewBox="0 0 123 60"><defs><filter id="cb"><feGaussianBlur stdDeviation="0.6"/></filter></defs><g filter="url(#cb)">
<rect width="123" height="60" fill="#2a869a"/>
<rect x="27" y="0" width="60" height="60" fill="#1d4e6a"/>
<rect x="29" y="10" width="25" height="50" fill="#1c1a1a"/>
<g fill="#e6c78e"><circle cx="33" cy="14" r="1.6"/><circle cx="38" cy="13" r="1.6"/><circle cx="34" cy="19" r="1.6"/><circle cx="39" cy="20" r="1.5"/><circle cx="33" cy="25" r="1.5"/><circle cx="45" cy="14" r="1.4"/><circle cx="46" cy="21" r="1.4"/><circle cx="35" cy="33" r="1.6"/><circle cx="38" cy="38" r="1.4"/></g>
<rect x="56" y="12" width="28" height="48" fill="#1b4660"/>
<rect x="86" y="0" width="6" height="60" fill="#c2cace"/>
<rect x="88" y="0" width="1.5" height="60" fill="#f0f4f4"/>
<rect x="92" y="0" width="22" height="60" fill="#2b8ba0"/>
<rect x="114" y="0" width="9" height="60" fill="#1c5c70"/>
<circle cx="118" cy="3" r="2.5" fill="#e8e0d0"/>
<ellipse cx="58" cy="34" rx="7" ry="10" fill="#2a1c18"/>
<ellipse cx="58" cy="38" rx="5" ry="8" fill="#ddb090"/>
<path d="M44 60 C46 50 52 47 58 47 C64 47 70 50 72 60 Z" fill="#e65a22"/>
</g></svg></div>
 <div class="a" style="left:139px;top:366px;width:124px;height:60px;overflow:hidden;background:#fff;border:1px solid #b0b0b0;border-bottom:none"><svg class="a" style="left:0;top:0" width="122" height="60" viewBox="0 0 122 60"><defs><filter id="cb2"><feGaussianBlur stdDeviation="0.6"/></filter></defs><g filter="url(#cb2)">
<path d="M60 20 C60 8 68 3 76 4 C86 5 91 12 90 26 L91 44 L62 44 Z" fill="#7b4a30"/>
<ellipse cx="74" cy="23" rx="9.5" ry="12.5" fill="#f1c9b1"/>
<path d="M46 60 C48 48 56 42 66 40 L84 38 C92 40 98 46 100 60 Z" fill="#e9b998"/>
<path d="M60 60 C62 54 68 52 74 54 L76 60 Z" fill="#f4f4f8"/>
<path d="M80 48 L96 44 L102 60 L84 60 Z" fill="#b86fd0"/>
</g></svg></div>
 <!-- bottom bar -->
 <div class="a" style="left:0;top:416px;width:273px;height:69px;background:#000"></div>
 <svg class="a" style="left:28px;top:429px" width="13" height="13" viewBox="0 0 13 13"><path d="M6.5 0.5 L12.8 6.6 H11 V12.5 H8 V8.5 H5 V12.5 H2 V6.6 H0.2 Z" fill="#ffffff"/></svg>
 <svg class="a" style="left:95px;top:427px" width="14" height="16" viewBox="0 0 14 16"><path d="M1 4 H13 L12 15.5 H2 Z" fill="#8a8a8a"/><path d="M3.5 4 V2.5 C3.5 1 5 0.5 7 0.5 C9 0.5 10.5 1 10.5 2.5 V4" fill="none" stroke="#8a8a8a" stroke-width="1.2"/><path d="M4.5 7 C5 10 9 10 9.5 7" fill="none" stroke="#000" stroke-width="1.1"/></svg>
 <svg class="a" style="left:162px;top:427px" width="16" height="16" viewBox="0 0 16 16"><path d="M0.5 1 H3 L5.5 11 H14 M4 4 H15.5 L14 9 H5" fill="#8a8a8a" stroke="#8a8a8a" stroke-width="1.6"/><circle cx="6" cy="14" r="1.5" fill="#8a8a8a"/><circle cx="13" cy="14" r="1.5" fill="#8a8a8a"/></svg>
 <svg class="a" style="left:232px;top:428px" width="14" height="15" viewBox="0 0 14 15"><circle cx="7" cy="4" r="3.5" fill="#8a8a8a"/><path d="M0.5 15 V12 C0.5 9.5 3 8 7 8 C11 8 13.5 9.5 13.5 12 V15 Z" fill="#8a8a8a"/></svg>
 <svg class="a" style="left:51px;top:463px" width="12" height="12" viewBox="0 0 12 12"><path d="M11 0.5 V11.5 L0.5 6 Z" fill="#9e9e9e"/></svg>
 <div class="a" style="left:131px;top:464px;width:10px;height:10px;border-radius:50%;background:#9e9e9e"></div>
 <div class="a" style="left:210px;top:464px;width:10.5px;height:10px;background:#9e9e9e"></div>
</div>

<div id="task" class="a"></div>
<!-- taskbar -->
<div class="a" style="left:0;top:728px;width:1366px;height:40px;background:linear-gradient(90deg,#424750 0%,#454b53 45%,#4a525c 62%,#4e5863 73%,#485361 86%,#3e4b5a 95%,#3d4a59 100%)"></div>
<svg class="a" style="left:11px;top:734px" width="28" height="27" viewBox="0 0 28 27"><path d="M0.5 4.2 L11.8 2.6 V12.6 H0.5 Z M13.4 2.4 L27.5 0.3 V12.6 H13.4 Z M0.5 14.2 H11.8 V24.3 L0.5 22.7 Z M13.4 14.2 H27.5 V26.6 L13.4 24.5 Z" fill="#ffffff"/></svg>
<!-- IE -->
<svg class="a" style="left:62px;top:729px" width="38" height="36" viewBox="0 0 38 36"><defs><linearGradient id="ieg" x1="0" y1="0" x2="0" y2="1"><stop offset="0" stop-color="#8ae0ff"/><stop offset="1" stop-color="#1b8ad6"/></linearGradient></defs><text x="20" y="31" text-anchor="middle" font-family="Liberation Sans" font-weight="bold" font-size="46" fill="url(#ieg)">e</text><path d="M6 33 C2 30 6 20 15 12 C23 5 31 2 34 4 C36 6 34 10 31 13" fill="none" stroke="#f2c200" stroke-width="2.2" stroke-linecap="round"/></svg>
<!-- explorer -->
<svg class="a" style="left:126px;top:734px" width="34" height="31" viewBox="0 0 34 31"><defs><linearGradient id="fg" x1="0" y1="0" x2="0" y2="1"><stop offset="0" stop-color="#fbefb4"/><stop offset="1" stop-color="#efd275"/></linearGradient><linearGradient id="sg" x1="0" y1="0" x2="0" y2="1"><stop offset="0" stop-color="#bfe8fa"/><stop offset="1" stop-color="#4aa2dc"/></linearGradient></defs><rect x="2" y="1" width="16" height="6" rx="1" fill="#e9d08c"/><rect x="4" y="2" width="3.5" height="2.4" fill="#18c018"/><rect x="7.5" y="2" width="7" height="2.4" fill="#fff"/><rect x="11" y="3" width="14" height="6" rx="1" fill="#e6cb84"/><rect x="13" y="4" width="3.5" height="2.4" fill="#d83018"/><rect x="16.5" y="4" width="6" height="2.4" fill="#fff"/><rect x="19" y="5" width="14" height="6" rx="1" fill="#eed692"/><rect x="21" y="6" width="3.5" height="2.4" fill="#1890f0"/><rect x="24.5" y="6" width="6" height="2.4" fill="#fff"/><path d="M1.2 7 H19 L20 10 H33 V28 H1.2 Z" fill="url(#fg)" stroke="#d8b860" stroke-width="0.8"/><path d="M5 17 H29 V29.7 H23 V23.7 H11.5 V29.7 H5 Z" fill="url(#sg)" stroke="#2a88cc" stroke-width="1"/></svg>
<!-- puzzle -->
<div class="a" style="left:189px;top:732px;width:32px;height:32px;border-radius:5px;background:radial-gradient(circle at 50% 20%,#3a3a3a,#0a0a0a 70%)"></div>
<svg class="a" style="left:191px;top:737px" width="28" height="22" viewBox="0 0 28 22"><path d="M6 2 H14 V9 H6 Z" fill="#e62f5a"/><path d="M14 2 H24 V10 H14 Z" fill="#f0c020"/><path d="M1 8 H12 V16 H2 Z" fill="#2d5ad0"/><path d="M11 9 H24 V19 H13 Z" fill="#70b030"/></svg>
<!-- HP -->
<svg class="a" style="left:251px;top:732px" width="32" height="32" viewBox="0 0 32 32"><circle cx="16" cy="16" r="16" fill="#ffffff"/><path d="M13.5 4 L7.5 24 H10.5 L13.4 14 H15.6 L12.8 24 H15.6 L18.4 14 C19.2 12 18.6 11 17 11 H14.3 L16.3 4 Z M19 11 H22.8 C24.6 11 25.2 12 24.6 14 L22.4 21 C21.8 23 20.8 24 19 24 H17.2 L14.6 32 H12 L17.7 14 H20.8 L18.2 21 H19.6 Z" fill="#40444c"/></svg>
<!-- keyboard monitor -->
<svg class="a" style="left:312px;top:732px" width="32" height="32" viewBox="0 0 32 32"><path d="M7 1 L30 3 V26 L9 23 Z" fill="#d8d8d8"/><path d="M9 3.5 L28 5 V23.5 L10.5 21 Z" fill="#1a3cc8"/><path d="M15 5 L28 6 V14 Z" fill="#5a8ef0" opacity="0.7"/><ellipse cx="20" cy="29" rx="7" ry="3" fill="#d8d8d8"/><rect x="18" y="24" width="4" height="4" fill="#b0b0b0"/><rect x="1" y="7" width="23" height="10" rx="1" fill="#e8e8e8"/><rect x="2.5" y="8.5" width="20" height="7" fill="#3a8ae0"/><g fill="#ffffff"><rect x="4" y="9.5" width="2" height="1.3"/><rect x="7" y="9.5" width="2" height="1.3"/><rect x="10" y="9.5" width="2" height="1.3"/><rect x="13" y="9.5" width="2" height="1.3"/><rect x="16" y="9.5" width="2" height="1.3"/><rect x="19" y="9.5" width="2" height="1.3"/><rect x="4" y="12" width="2" height="1.3"/><rect x="7" y="12" width="2" height="1.3"/><rect x="10" y="12" width="2" height="1.3"/><rect x="13" y="12" width="2" height="1.3"/><rect x="16" y="12" width="2" height="1.3"/><rect x="19" y="12" width="2" height="1.3"/></g></svg>
<!-- sublime -->
<div class="a" style="left:375px;top:732px;width:32px;height:32px;border-radius:3px;background:linear-gradient(#474747,#3c3c3c)"></div>
<svg class="a" style="left:375px;top:732px" width="32" height="32" viewBox="0 0 32 32"><path d="M8.1 10.1 L24 5.7 V11.1 L17.3 13.3 L24 15.3 V21.3 L8.1 26.2 V20.3 L14.3 18.3 L8.1 16.8 Z" fill="#ff9a00"/><path d="M14.3 18.3 L24 15.3 V21.3 Z" fill="#f08c00" opacity="0.6"/></svg>
<!-- boxes -->
<div class="a tb" style="left:424px;width:50px"></div>
<div class="a tbl" style="left:475px"></div><div class="a tbl" style="left:479px"></div>
<div class="a tb" style="left:486px;width:58px"></div>
<div class="a tb" style="left:548px;width:58px"></div>
<div class="a tb" style="left:672px;width:58px"></div>
<div class="a tb" style="left:734px;width:53px"></div>
<div class="a tbl" style="left:788px"></div>
<div class="a tb" style="left:796px;width:50px"></div>
<div class="a tbl" style="left:847px"></div><div class="a tbl" style="left:851px"></div>
<div class="a tb" style="left:858px;width:58px;background:rgba(255,255,255,0.36);border-color:rgba(255,255,255,0.75)"></div>
<div class="a tb" style="left:920px;width:58px"></div>
<!-- chrome -->
<svg class="a" style="left:434px;top:733px" width="30" height="30" viewBox="-15 -15 30 30"><path d="M0 -15 A15 15 0 0 1 13 7.5 L6.5 3.75 A7.5 7.5 0 0 0 0 -7.5 Z" fill="#fbc02d"/><path d="M0 -15 A15 15 0 0 0 -13 7.5 L-6.5 3.75 A7.5 7.5 0 0 1 0 -7.5 Z" fill="#e53935"/><path d="M-13 -7.5 A15 15 0 0 0 0 15 L6.5 3.75 A7.5 7.5 0 0 1 -6.5 3.75 Z" fill="#43a047"/><path d="M13 -7.5 A15 15 0 0 1 0 15 L6.5 3.75 A7.5 7.5 0 0 0 7.5 0 Z" fill="#fbc02d"/><path d="M0 -15 A15 15 0 0 1 13 -7.5 L0 -7.5 Z" fill="#e53935"/><circle r="7" fill="#ffffff"/><circle r="5.6" fill="#4a8af4"/></svg>
<!-- word -->
<svg class="a" style="left:499px;top:732px" width="32" height="31" viewBox="0 0 32 31"><path d="M5 3 C8 1 16 1 22 2 V26 C16 25 8 26 3 28 Z" fill="#3a6ad0"/><path d="M3 28 C5 20 5 10 5 3" fill="none" stroke="#bcd4f4" stroke-width="1.5"/><path d="M9 6 L31 5 L29 30 L7 28 Z" fill="#f2f6fc"/><text x="12" y="16" font-family="Liberation Serif" font-style="italic" font-weight="bold" font-size="12" fill="#2a4aa8">W</text><g fill="#2a4aa8"><rect x="22" y="8" width="6" height="2"/><rect x="22" y="11.5" width="6" height="2"/><rect x="11" y="19" width="17" height="2"/><rect x="10" y="23" width="18" height="2"/></g></svg>
<!-- android studio -->
<svg class="a" style="left:563px;top:733px" width="28" height="28" viewBox="0 0 28 28"><circle cx="14" cy="13" r="12.5" fill="#3ddc84"/><path d="M1.5 14 A12.5 12.5 0 0 0 26.5 14 Z" fill="#32c070"/><path d="M14 6 L5 27 M14 6 L23 27" stroke="#e0e8ee" stroke-width="2.2"/><path d="M10.5 4 H17.5 V12 L14 15 L10.5 12 Z" fill="#083042"/><circle cx="14" cy="9" r="1.6" fill="#3ddc84"/></svg>
<!-- zoom -->
<div class="a" style="left:624px;top:733px;width:30px;height:30px;border-radius:9px;background:#4a8cff"></div>
<svg class="a" style="left:628px;top:741px" width="22" height="14" viewBox="0 0 22 14"><rect x="1" y="1" width="13" height="12" rx="2.5" fill="#ffffff"/><path d="M15 5 L20.5 1.5 V12.5 L15 9 Z" fill="#ffffff"/></svg>
<!-- utorrent -->
<svg class="a" style="left:685px;top:732px" width="32" height="32" viewBox="0 0 32 32"><defs><radialGradient id="utg" cx="0.5" cy="0.3" r="0.7"><stop offset="0" stop-color="#8cc850"/><stop offset="1" stop-color="#5aa030"/></radialGradient><clipPath id="utc"><circle cx="16" cy="16" r="15.5"/></clipPath></defs><circle cx="16" cy="16" r="15.5" fill="url(#utg)"/><g clip-path="url(#utc)"><text x="15" y="24" text-anchor="middle" font-family="Liberation Sans" font-weight="bold" font-size="30" fill="#ffffff" transform="rotate(-12 16 16)">µ</text></g></svg>
<!-- vscode -->
<svg class="a" style="left:744px;top:732px" width="33" height="32" viewBox="0 0 33 32"><path d="M4 11 L23 28.5 M4 21.5 L23 3.5" stroke="#137fd0" stroke-width="4.6" stroke-linecap="round"/><path d="M21.5 0.5 L32 5 V27 L21.5 31.5 Z" fill="#24a3f0"/></svg>
<!-- paint -->
<svg class="a" style="left:804px;top:732px" width="34" height="32" viewBox="0 0 34 32"><ellipse cx="14" cy="18" rx="13" ry="9" transform="rotate(-20 14 18)" fill="#cfe4f4" stroke="#8ab4d4" stroke-width="1"/><circle cx="5.5" cy="20" r="2.5" fill="#e02020"/><circle cx="10" cy="13.5" r="2.5" fill="#58b030"/><circle cx="16.5" cy="10" r="2.5" fill="#f0b000"/><circle cx="13" cy="20" r="2" fill="#7090a8"/><path d="M31 3 L16 30" stroke="#e07820" stroke-width="2.4"/><path d="M27 6 L33 1" stroke="#e0a060" stroke-width="4"/></svg>
<!-- phone app -->
<svg class="a" style="left:872px;top:736px" width="30" height="25" viewBox="0 0 30 25"><rect x="0.5" y="1" width="29" height="20" rx="1.5" fill="#3ddc84"/><rect x="9" y="4" width="12" height="20" rx="2" fill="#0b2a3a"/><rect x="11" y="6.5" width="8" height="15" fill="#d8eefa"/></svg>
<!-- photos -->
<svg class="a" style="left:934px;top:734px" width="31" height="25" viewBox="0 0 31 25"><rect x="3" y="2.5" width="25" height="20" fill="#ffffff"/><rect x="4.5" y="4" width="22" height="17" fill="#4aa0e0"/><path d="M4.5 11 C10 9 14 12 26.5 14 V17 H4.5 Z" fill="#3a8a40"/><rect x="4.5" y="16" width="22" height="5" fill="#3a80c0"/><path d="M0.5 6 V0.5 H6 M25 0.5 H30.5 V6 M30.5 19 V24.5 H25 M6 24.5 H0.5 V19" fill="none" stroke="#2a90e8" stroke-width="2.4"/></svg>
<!-- help -->
<svg class="a" style="left:1065px;top:733px" width="32" height="32" viewBox="0 0 32 32"><circle cx="16" cy="16" r="15.5" fill="#1c8ee8"/><circle cx="16" cy="16" r="13.5" fill="#0a1e52"/><path d="M3 15 A13 13 0 0 1 29 15 Z" fill="#2a4fa0" opacity="0.6"/><text x="16" y="24" text-anchor="middle" font-family="Liberation Sans" font-weight="bold" font-size="21" fill="#ffffff">?</text></svg>
<svg class="a" style="left:1110px;top:744px" width="12" height="8"><path d="M1 7 L6 2 L11 7 Z" fill="#ffffff"/></svg>
<svg class="a" style="left:1132px;top:740px" width="16" height="17" viewBox="0 0 16 17"><path d="M2 1 V5 M5 1 V5 M0.5 5 H6.5 V8 C6.5 10 5 11 3.5 11 C2 11 0.5 10 0.5 8 Z M3.5 11 V16" stroke="#ffffff" stroke-width="1.3" fill="none"/><rect x="8.5" y="3" width="6.5" height="13" fill="none" stroke="#ffffff" stroke-width="1.3"/><rect x="10" y="1.5" width="3.5" height="1.5" fill="#ffffff"/><rect x="10" y="8" width="3.5" height="7" fill="#ffffff"/></svg>
<svg class="a" style="left:1157px;top:740px" width="14" height="17" viewBox="0 0 14 17"><ellipse cx="7" cy="8.5" rx="6.5" ry="8.2" fill="#0d3a78"/><path d="M3.5 5 L10 11 L7 13.5 V3.5 L10 6 L3.5 12" fill="none" stroke="#ffffff" stroke-width="1.2"/></svg>
<svg class="a" style="left:1180px;top:740px" width="17" height="17" viewBox="0 0 17 17"><path d="M1.5 1 V16" stroke="#ffffff" stroke-width="1.4"/><path d="M2 1.5 H11 L9 4.5 L11 7.5 H2 Z" fill="#ffffff"/><circle cx="12" cy="12" r="4.5" fill="#e02828"/><path d="M10 10 L14 14 M14 10 L10 14" stroke="#fff" stroke-width="1.3"/></svg>
<svg class="a" style="left:1204px;top:741px" width="16" height="15" viewBox="0 0 16 15"><g fill="#ffffff"><rect x="0.5" y="12" width="2" height="3"/><rect x="3.5" y="10" width="2" height="5"/><rect x="6.5" y="7.5" width="2" height="7.5"/><rect x="9.5" y="4.5" width="2" height="10.5"/><rect x="12.5" y="1" width="2" height="14"/></g></svg>
<svg class="a" style="left:1228px;top:740px" width="16" height="16" viewBox="0 0 16 16"><path d="M1 5.5 H4 L8 2 V14 L4 10.5 H1 Z" fill="none" stroke="#ffffff" stroke-width="1.2"/><path d="M10 5.5 C11 6.5 11 9.5 10 10.5 M12 3.5 C14 5.5 14 10.5 12 12.5" fill="none" stroke="#ffffff" stroke-width="1.1"/></svg>
<div class="a" style="left:1258.8px;top:739px;height:18px;line-height:18px;font-size:12px;color:#ffffff">ENG</div>
<div class="a" style="left:1298.5px;top:732px;height:17px;line-height:17px;font-size:12px;color:#ffffff">04:44 PM</div>
<div class="a" style="left:1300px;top:749px;height:17px;line-height:17px;font-size:12px;color:#ffffff">09-07-20</div>

</body></html>
